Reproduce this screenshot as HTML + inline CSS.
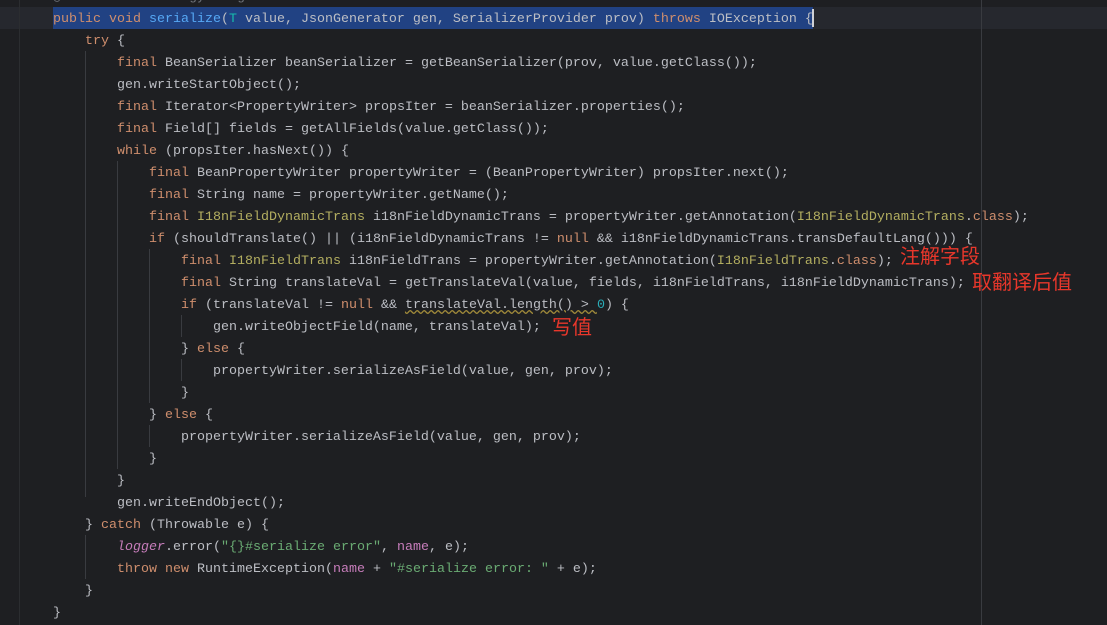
<!DOCTYPE html><html><head><meta charset="utf-8"><style>
body{margin:0;width:1107px;height:625px;background:#1e1f22;overflow:hidden;position:relative;font-family:"Liberation Mono",monospace;font-size:13.33px;color:#bcbec4}
.l{position:absolute;left:53px;height:22px;line-height:22px;white-space:pre;margin-top:2px}
.k{color:#cf8e6d}.m{color:#56a8f5}.t{color:#16baac}.s{color:#6aab73}.n{color:#2aacb8}.f{color:#c77dbb}.a{color:#b3ae60}.i{font-style:italic}
.r{position:absolute;color:#e8372b;font-family:"Noto Sans CJK SC",sans-serif;font-size:20px;line-height:22px}
.v{position:absolute;width:1px;background:#393b40}
</style></head><body>
<div style="position:absolute;left:0;top:7px;width:1107px;height:22px;background:#26282e"></div>
<div style="position:absolute;left:53px;top:7px;width:760px;height:22px;background:#214283"></div>
<div style="position:absolute;left:812px;top:9px;width:2px;height:18px;background:#ced0d6"></div>
<div class="v" style="left:19px;top:0;height:625px;background:#2b2d30"></div>
<div class="v" style="left:981px;top:0;height:625px;background:#393b40"></div>
<div class="v" style="left:85px;top:51px;height:446px"></div>
<div class="v" style="left:117px;top:161px;height:308px"></div>
<div class="v" style="left:85px;top:535px;height:44px"></div>
<div class="v" style="left:149px;top:249px;height:154px"></div>
<div class="v" style="left:181px;top:315px;height:22px"></div>
<div class="v" style="left:181px;top:359px;height:22px"></div>
<div class="v" style="left:149px;top:425px;height:22px"></div>
<div style="position:absolute;left:0;top:2px;width:6px;height:4px;color:#c94f4f;font-size:10px;line-height:4px">ˋ</div>
<div class="l" style="top:-15px;color:#6f737a">@Override    huangyusong</div>
<div class="l" style="top:7px"><span class="k">public void </span><span class="m">serialize</span>(<span class="t">T</span> value, JsonGenerator gen, SerializerProvider prov) <span class="k">throws </span>IOException {</div>
<div class="l" style="top:29px">    <span class="k">try</span> {</div>
<div class="l" style="top:51px">        <span class="k">final </span>BeanSerializer beanSerializer = getBeanSerializer(prov, value.getClass());</div>
<div class="l" style="top:73px">        gen.writeStartObject();</div>
<div class="l" style="top:95px">        <span class="k">final </span>Iterator&lt;PropertyWriter&gt; propsIter = beanSerializer.properties();</div>
<div class="l" style="top:117px">        <span class="k">final </span>Field[] fields = getAllFields(value.getClass());</div>
<div class="l" style="top:139px">        <span class="k">while </span>(propsIter.hasNext()) {</div>
<div class="l" style="top:161px">            <span class="k">final </span>BeanPropertyWriter propertyWriter = (BeanPropertyWriter) propsIter.next();</div>
<div class="l" style="top:183px">            <span class="k">final </span>String name = propertyWriter.getName();</div>
<div class="l" style="top:205px">            <span class="k">final </span><span class="a">I18nFieldDynamicTrans</span> i18nFieldDynamicTrans = propertyWriter.getAnnotation(<span class="a">I18nFieldDynamicTrans</span>.<span class="k">class</span>);</div>
<div class="l" style="top:227px">            <span class="k">if </span>(shouldTranslate() || (i18nFieldDynamicTrans != <span class="k">null</span> &amp;&amp; i18nFieldDynamicTrans.transDefaultLang())) {</div>
<div class="l" style="top:249px">                <span class="k">final </span><span class="a">I18nFieldTrans</span> i18nFieldTrans = propertyWriter.getAnnotation(<span class="a">I18nFieldTrans</span>.<span class="k">class</span>);</div>
<div class="l" style="top:271px">                <span class="k">final </span>String translateVal = getTranslateVal(value, fields, i18nFieldTrans, i18nFieldDynamicTrans);</div>
<div class="l" style="top:293px">                <span class="k">if </span>(translateVal != <span class="k">null</span> &amp;&amp; <span style="text-decoration:underline wavy #a08a3a">translateVal.length() &gt; </span><span class="n">0</span>) {</div>
<div class="l" style="top:315px">                    gen.writeObjectField(name, translateVal);</div>
<div class="l" style="top:337px">                } <span class="k">else </span>{</div>
<div class="l" style="top:359px">                    propertyWriter.serializeAsField(value, gen, prov);</div>
<div class="l" style="top:381px">                }</div>
<div class="l" style="top:403px">            } <span class="k">else </span>{</div>
<div class="l" style="top:425px">                propertyWriter.serializeAsField(value, gen, prov);</div>
<div class="l" style="top:447px">            }</div>
<div class="l" style="top:469px">        }</div>
<div class="l" style="top:491px">        gen.writeEndObject();</div>
<div class="l" style="top:513px">    } <span class="k">catch </span>(Throwable e) {</div>
<div class="l" style="top:535px">        <span class="f i">logger</span>.error(<span class="s">"{}#serialize error"</span>, <span class="f">name</span>, e);</div>
<div class="l" style="top:557px">        <span class="k">throw new </span>RuntimeException(<span class="f">name</span> + <span class="s">"#serialize error: "</span> + e);</div>
<div class="l" style="top:579px">    }</div>
<div class="l" style="top:601px">}</div>
<div class="r" style="left:900px;top:244px">注解字段</div>
<div class="r" style="left:972px;top:270px">取翻译后值</div>
<div class="r" style="left:552px;top:315px">写值</div>
</body></html>
